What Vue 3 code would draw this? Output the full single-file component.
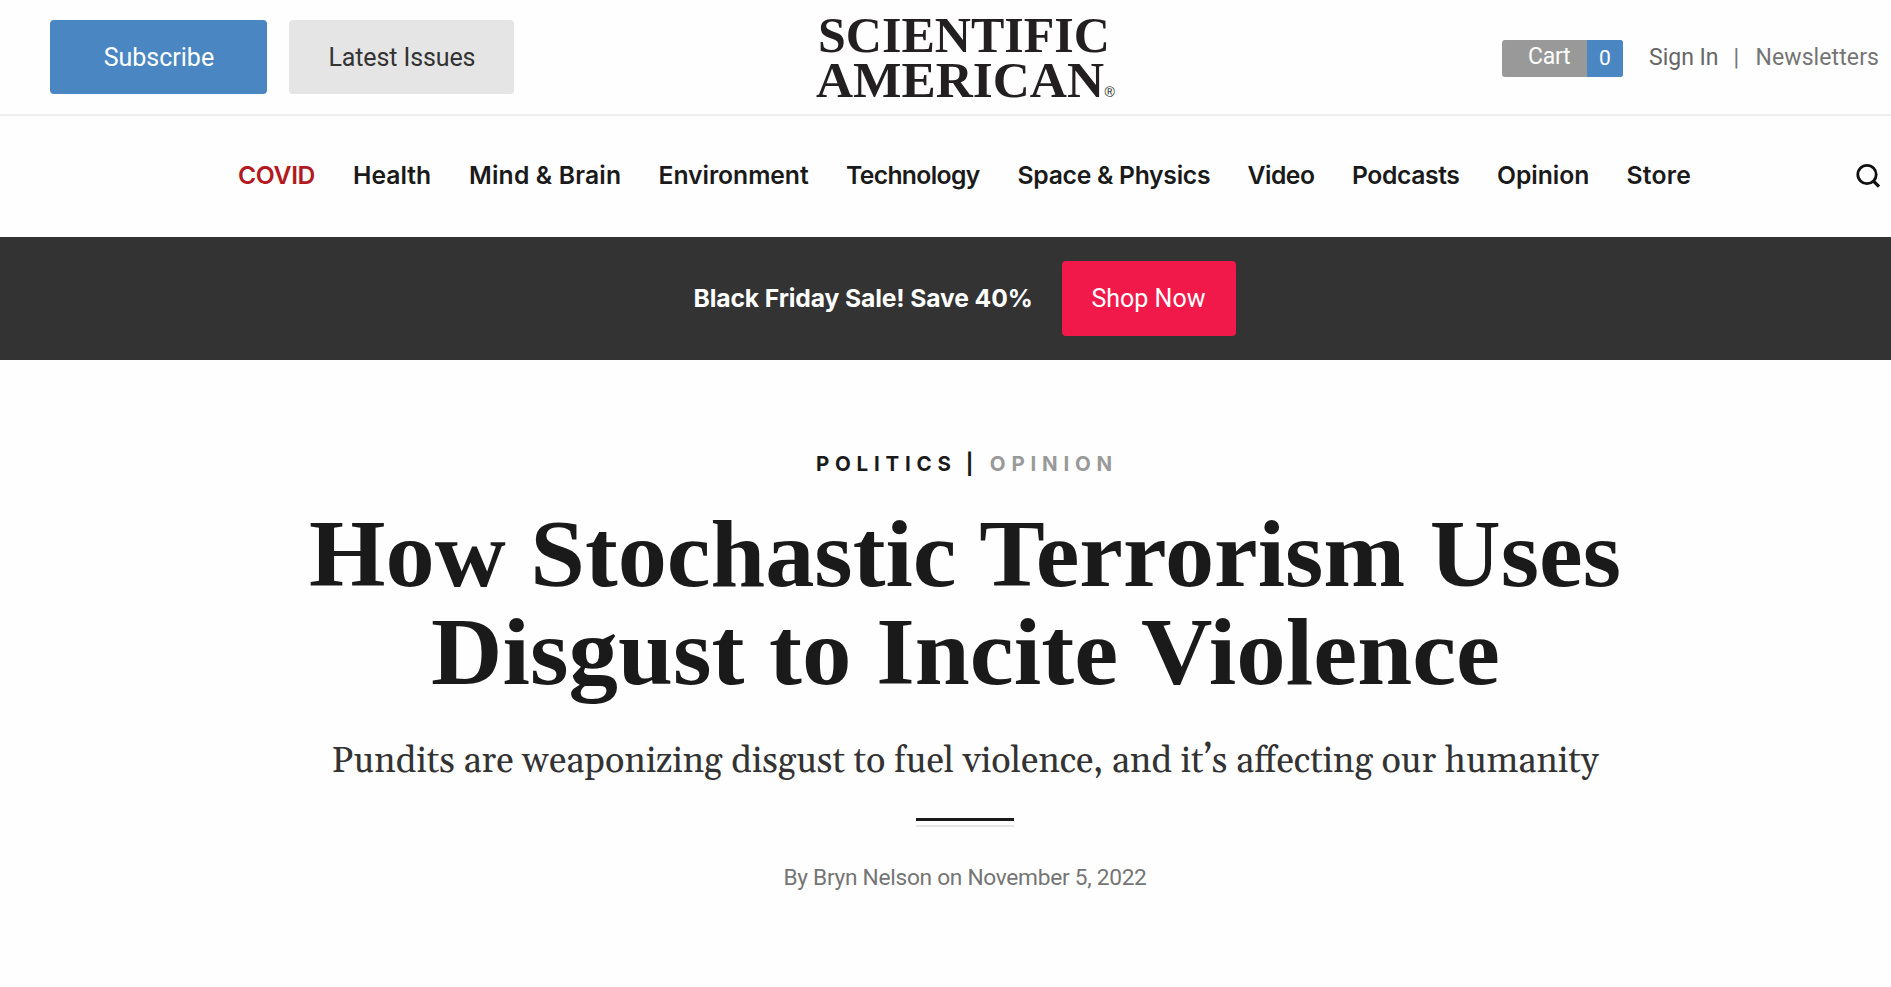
<script setup>
const sections = [
  { label: 'COVID', tracking: -0.35, accent: true },
  { label: 'Health', tracking: 0 },
  { label: 'Mind & Brain', tracking: 0.18 },
  { label: 'Environment', tracking: -0.05 },
  { label: 'Technology', tracking: -0.65 },
  { label: 'Space & Physics', tracking: -0.27 },
  { label: 'Video', tracking: -0.5 },
  { label: 'Podcasts', tracking: -0.4 },
  { label: 'Opinion', tracking: -0.05 },
  { label: 'Store', tracking: 0.25 },
]
</script>

<template>
  <div class="page">
    <header class="masthead">
      <div class="actions">
        <a class="btn subscribe">Subscribe</a>
        <a class="btn issues">Latest Issues</a>
      </div>
      <svg class="logo" width="300" height="92" viewBox="0 0 300 92" role="img" aria-label="Scientific American">
        <text x="4" y="43.7" textLength="292" lengthAdjust="spacingAndGlyphs">SCIENTIFIC</text>
        <text x="2" y="88.7" textLength="288" lengthAdjust="spacingAndGlyphs">AMERICAN</text>
        <text class="mark" x="290.5" y="88.7">®</text>
      </svg>
      <div class="account">
        <a class="cart"><span class="cart-label">Cart</span><span class="cart-count">0</span></a>
        <a class="signin">Sign In</a>
        <span class="bar">|</span>
        <a class="news">Newsletters</a>
      </div>
    </header>

    <nav class="nav">
      <ul>
        <li v-for="s in sections" :key="s.label" :class="{ accent: s.accent }" :style="{ letterSpacing: s.tracking + 'px' }">{{ s.label }}</li>
      </ul>
      <svg class="search" width="26" height="26" viewBox="0 0 26 26" fill="none" stroke="#111" stroke-width="2.8">
        <circle cx="12" cy="11.5" r="9.2" />
        <path d="M18 17.6 L24 23.6" stroke-width="3.4" />
      </svg>
    </nav>

    <div class="promo">
      <strong>Black Friday Sale! Save 40%</strong>
      <a class="btn shop">Shop Now</a>
    </div>

    <article class="article">
      <p class="kicker"><span class="topic">POLITICS</span><span class="sep">|</span><span class="kind">OPINION</span></p>
      <h1 class="headline">
        <svg width="1320" height="196" viewBox="0 0 1320 196">
          <text x="4" y="77" textLength="1312" lengthAdjust="spacingAndGlyphs">How Stochastic Terrorism Uses</text>
          <text x="126" y="174.5" textLength="1069" lengthAdjust="spacingAndGlyphs">Disgust to Incite Violence</text>
        </svg>
      </h1>
      <p class="deck">Pundits are weaponizing disgust to fuel violence, and it’s affecting our humanity</p>
      <div class="rule"></div>
      <p class="byline">By Bryn Nelson on November 5, 2022</p>
    </article>
  </div>
</template>

<style>
body { background: #fefefe; }
</style>

<style scoped>
.page {
  width: 1891px;
  height: 987px;
  overflow: hidden;
  background: #fefefe;
  font-family: Roboto, "Liberation Sans", sans-serif;
  color: #1a1a1a;
}
.masthead {
  display: grid;
  grid-template-columns: 814px 300px 1fr;
  height: 116px;
  box-sizing: border-box;
  padding-top: 8px;
  border-bottom: 2px solid #eee;
}
.actions { display: flex; gap: 22px; padding: 12.4px 0 0 50.4px; }
.btn {
  display: flex;
  align-items: center;
  justify-content: center;
  box-sizing: border-box;
  height: 74px;
  border-radius: 4px;
  font-size: 25px;
  padding-bottom: 0;
}
.subscribe { width: 217px; background: #4a87c2; color: #fff; }
.issues { width: 225px; background: #e5e5e5; color: #333; letter-spacing: -0.1px; }
.logo { overflow: visible; }
.logo text {
  font: 700 51.5px "Liberation Serif", serif;
  fill: #231f20;
}
.logo text.mark { font: 400 14px "Liberation Sans", sans-serif; }
.account {
  display: flex;
  align-items: center;
  height: 37px;
  margin: 32px 12px 0 388px;
  font-size: 23px;
  color: #757575;
}
.cart {
  display: flex;
  width: 121px;
  height: 37px;
  border-radius: 3px;
  overflow: hidden;
  color: #fff;
  background: #999;
  line-height: 34px;
}
.cart-label { width: 85px; box-sizing: border-box; padding-left: 26px; letter-spacing: -0.3px; }
.cart-count { width: 36px; text-align: center; background: #4a87c2; font-size: 21px; line-height: 36px; }
.signin { margin-left: 26px; padding-bottom: 2px; color: #666; }
.bar { margin-left: 15px; padding-bottom: 2px; font-size: 23px; }
.news { margin-left: auto; padding-bottom: 2px; letter-spacing: 0.1px; }
.nav {
  display: flex;
  justify-content: space-between;
  align-items: center;
  height: 121px;
  box-sizing: border-box;
  padding: 0 10px 2px 238px;
}
.nav ul {
  display: grid;
  grid-template-columns: 115px 116px 189.5px 187.5px 171.5px 230px 104.5px 145px 129.5px 80px;
  margin: 0;
  padding: 0 0 2px;
  list-style: none;
  font: 600 24.7px/30px Inter, sans-serif;
  white-space: nowrap;
}
.accent { color: #b3191e; }
.promo {
  display: flex;
  align-items: center;
  justify-content: center;
  height: 123px;
  padding-left: 38px;
  box-sizing: border-box;
  background: #333;
  color: #fff;
}
.promo strong {
  width: 368px;
  font: 700 24.7px/30px Inter, sans-serif;
  letter-spacing: -0.13px;
  padding-bottom: 2px;
  white-space: nowrap;
}
.shop { width: 174px; height: 75px; padding-bottom: 1px; background: #f1194a; }
.article {
  display: flex;
  flex-direction: column;
  align-items: center;
  padding: 91px 0 0 39px;
}
.kicker {
  display: flex;
  height: 26px;
  margin: 0 0 0 4px;
  font: 700 20.5px/26px Inter, sans-serif;
}
.topic, .kind { letter-spacing: 5.8px; }
.sep { width: 24px; padding-left: 9px; }
.kind { color: #999; }
.headline { height: 196px; margin: 32px 0 0; }
.headline svg { display: block; overflow: visible; }
.headline text { font: 700 95px "Liberation Serif", serif; fill: #1a1a1a; }
.deck {
  margin: 33px 0 0;
  font: 36px/48px Gelasio, Georgia, "Liberation Serif", serif;
  color: #333;
  white-space: nowrap;
}
.rule {
  width: 98px;
  height: 9px;
  box-sizing: border-box;
  margin-top: 32px;
  border-top: 3px solid #1a1a1a;
  border-bottom: 2px solid #e5e5e5;
}
.byline {
  margin: 36px 0 0;
  font-size: 22.7px;
  line-height: 30px;
  letter-spacing: -0.28px;
  color: #757575;
}
</style>
